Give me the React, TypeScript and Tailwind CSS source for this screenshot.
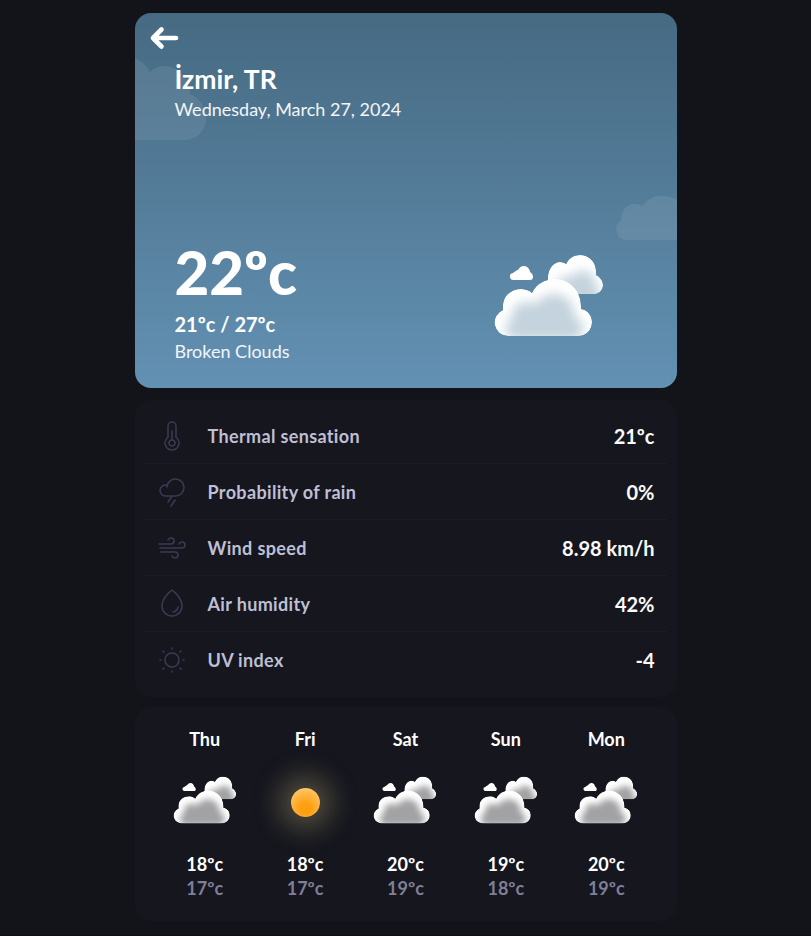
import { PiCloudRainLight, PiDropLight, PiSunDimLight, PiThermometerSimpleLight, PiWindLight } from 'react-icons/pi';
import type { IconType } from 'react-icons';

const details: { icon: IconType; label: string; value: string }[] = [
  { icon: PiThermometerSimpleLight, label: 'Thermal sensation', value: '21ºc' },
  { icon: PiCloudRainLight, label: 'Probability of rain', value: '0%' },
  { icon: PiWindLight, label: 'Wind speed', value: '8.98 km/h' },
  { icon: PiDropLight, label: 'Air humidity', value: '42%' },
  { icon: PiSunDimLight, label: 'UV index', value: '-4' },
];

const forecast = [
  { day: 'Thu', hi: '18ºc', lo: '17ºc', sun: false },
  { day: 'Fri', hi: '18ºc', lo: '17ºc', sun: true },
  { day: 'Sat', hi: '20ºc', lo: '19ºc', sun: false },
  { day: 'Sun', hi: '19ºc', lo: '18ºc', sun: false },
  { day: 'Mon', hi: '20ºc', lo: '19ºc', sun: false },
];

const FRONT = 'M14 82A13.5 13.5 0 0 1 9 56V52C9 42 17 35 27 35C31 35 35 36 38 39C42 30 51 25 61 25C76 25 87 37 87 52V55C94 56 98 62 98 68C98 76 92 82 84 82Z';
const BACK = 'M50 40C50 32 52 28 54 26C53 16 59 8 66 8C69 8 71 9 72 10C75 4 80 1 86 1C95 1 102 8 102 17V21C106 23 109 27 109 31C109 36 105 40 100 40Z';
const SMALL = 'M20 26A3.5 3.5 0 0 1 19 19C21 18 22 16 24 16C25 14 27 12 30 12C33 12 36 15 36 18C38 19 39 21 39 23C39 25 38 26 36 26Z';

function ShadedPath({ id, d, mid, inner, blur }: { id: string; d: string; mid: string; inner: string; blur: string }) {
  return (
    <>
      <clipPath id={id}>
        <path d={d} />
      </clipPath>
      <g clipPath={`url(#${id})`}>
        <path d={d} fill="#ffffff" />
        <path d={d} fill={mid} transform={inner} filter={`url(#${blur})`} />
      </g>
    </>
  );
}

function CloudsIcon({ id, mid, className }: { id: string; mid: string; className: string }) {
  return (
    <svg viewBox="0 0 110 83" className={className}>
      <defs>
        <filter id={`${id}-blur`} x="-30%" y="-30%" width="160%" height="160%">
          <feGaussianBlur stdDeviation="6.5" />
        </filter>
      </defs>
      <path d={SMALL} fill="#ffffff" />
      <ShadedPath id={`${id}-back`} d={BACK} mid={mid} blur={`${id}-blur`} inner="translate(16 16) scale(0.84)" />
      <ShadedPath id={`${id}-front`} d={FRONT} mid={mid} blur={`${id}-blur`} inner="translate(11 20) scale(0.8)" />
    </svg>
  );
}

export default function App() {
  return (
    <div className="h-[936px] bg-[#0d0e11] font-['Lato','Noto_Sans',sans-serif] text-white">
      <div className="flex h-[935px] flex-col items-center overflow-hidden bg-[#13141a] pt-[13px]">
        <section className="relative flex h-[375px] w-[542px] shrink-0 flex-col justify-between overflow-hidden rounded-2xl bg-gradient-to-b from-[#466a82] to-[#6391b3] pb-[24px] pl-10 pr-[73px]">
          <button className="absolute left-[13px] top-[13px] text-white">
            <svg viewBox="0 0 32 24" className="h-6 w-8" fill="none" stroke="currentColor" strokeWidth="4.6" strokeLinecap="round" strokeLinejoin="round">
              <path d="M28 12H5M13.5 3.5 5 12l8.5 8.5" />
            </svg>
          </button>
          <svg viewBox="0 0 71 82" className="absolute left-0 top-[45px] h-[82px] w-[71px]" fill="#ffffff" fillOpacity="0.08">
            <path d="M0 0C6 2 12 8 15 14C20 9 25 8 30 8C43 8 54 20 55 36C65 40 71 50 71 60C71 72 62 82 50 82H0Z" />
          </svg>
          <svg viewBox="0 0 61 46" className="absolute right-0 top-[182px] h-[46px] w-[61px]" fill="#ffffff" fillOpacity="0.08">
            <path d="M11 45A11 11 0 0 1 5 25C5 15 11 9 19 9C22 9 25 10 27 11C31 4 38 1 46 1C54 1 61 4 61 6V45Z" />
          </svg>

          <div className="relative pt-[50px]">
            <h1 className="text-[26.5px] font-bold leading-[32px]">İzmir, TR</h1>
            <p className="text-lg leading-[28px] text-[#f3f6f8]">Wednesday, March 27, 2024</p>
          </div>

          <div className="flex items-end justify-between">
            <div>
              <p className="text-6xl font-black leading-[60px]">22ºc</p>
              <p className="mt-[8px] text-xl font-bold leading-[28px]">21ºc / 27ºc</p>
              <p className="text-lg leading-[26px] text-[#f3f6f8]">Broken Clouds</p>
            </div>
            <CloudsIcon id="main" mid="#c4d3dd" className="mb-[27px] h-[83px] w-[110px]" />
          </div>
        </section>

        <section className="mt-3 flex h-[297px] w-[542px] shrink-0 flex-col rounded-2xl bg-[#15161e] px-[10px] py-2">
          {details.map(({ icon: Icon, label, value }, i) => (
            <div key={label} className={`flex h-[56px] items-center pl-[11px] pr-3 ${i < details.length - 1 ? 'border-b border-[#1c1c27]' : ''}`}>
              <Icon size={32} className="shrink-0 text-[#3b3b54]" />
              <span className="ml-5 flex-1 text-lg font-bold tracking-[0.35px] text-[#bfbfd4]">{label}</span>
              <span className="text-xl font-bold text-[#fafafa]">{value}</span>
            </div>
          ))}
        </section>

        <section className="mt-[10px] flex h-[214px] w-[542px] shrink-0 justify-between rounded-2xl bg-[#15161e] px-5 pt-[19px]">
          {forecast.map((f) => (
            <div key={f.day} className="flex w-[100.4px] flex-col items-center">
              <span className="text-lg font-bold leading-[26px]">{f.day}</span>
              <div className="mt-4 flex h-[64px] w-full items-center justify-center">
                {f.sun ? (
                  <div className="h-[29px] w-[29px] translate-y-[2px] rounded-full bg-[radial-gradient(circle_at_50%_70%,#ff9f0f_20%,#ffcf80_95%)] shadow-[0_0_28px_12px_rgba(245,225,150,0.28)]" />
                ) : (
                  <CloudsIcon id={`day${f.day}`} mid="#a2a2a4" className="h-[48px] w-[64px]" />
                )}
              </div>
              <span className="mt-5 text-lg font-bold leading-[24px]">{f.hi}</span>
              <span className="text-lg font-bold leading-[24px] text-[#7f7f98]">{f.lo}</span>
            </div>
          ))}
        </section>
      </div>
    </div>
  );
}
